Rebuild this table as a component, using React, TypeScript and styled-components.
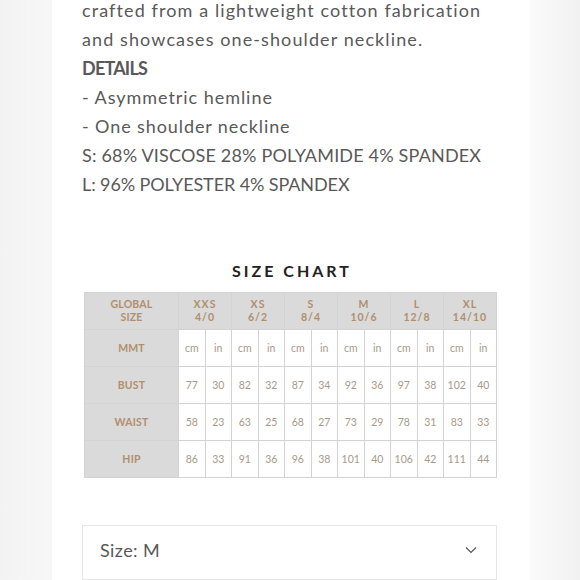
import React from 'react';
import styled, { createGlobalStyle } from 'styled-components';

const GlobalStyle = createGlobalStyle`
  html, body {
    margin: 0;
    padding: 0;
  }
  body {
    width: 580px;
    height: 580px;
    overflow: hidden;
    background: linear-gradient(90deg, #f3f3f3 0%, #f7f7f7 9%, #fbfbfb 91%, #f1f1f1 100%);
    font-family: 'Lato', 'Liberation Sans', sans-serif;
  }
`;

const Page = styled.div`
  width: 478px;
  height: 580px;
  margin-left: 52px;
  background: #ffffff;
  overflow: hidden;
`;

const Description = styled.div`
  padding: 0 30px;
  margin-top: -4px;
  color: #595959;
  font-size: 18px;
  line-height: 29px;
`;

const Line = styled.div<{ bold?: boolean; spacing?: number }>`
  font-weight: ${p => (p.bold ? 700 : 400)};
  letter-spacing: ${p => p.spacing ?? 0}px;
  white-space: nowrap;
`;

const ChartTitle = styled.h2`
  margin: 62px 0 12px;
  text-align: center;
  font-size: 16px;
  font-weight: 700;
  letter-spacing: 3px;
  color: #222;
  padding-left: 2px;
`;

const Table = styled.table`
  margin-left: 32px;
  border-collapse: collapse;
  table-layout: fixed;
  width: 413px;
  font-size: 10.5px;
`;

const Cell = styled.td<{ head?: boolean }>`
  border: 1px solid #d3d3d3;
  height: 36px;
  padding: 0;
  text-align: center;
  vertical-align: middle;
  background: ${p => (p.head ? '#dadada' : '#fff')};
  color: ${p => (p.head ? '#b08f6c' : '#a8998a')};
  font-weight: ${p => (p.head ? 700 : 400)};
  line-height: 13px;
  letter-spacing: ${p => (p.head ? '0.2px' : '0')};
`;

const SizeCell = styled(Cell)`
  letter-spacing: 1px;
`;

const Select = styled.div`
  margin: 47px 0 0 30px;
  width: 415px;
  height: 55px;
  border: 1px solid #e6e6e6;
  box-sizing: border-box;
  display: flex;
  align-items: center;
  justify-content: space-between;
  padding: 0 19px 5px 17px;
  color: #595959;
  font-size: 18px;
  letter-spacing: 0.4px;
`;

const sizes = [
  ['XXS', '4/0'],
  ['XS', '6/2'],
  ['S', '8/4'],
  ['M', '10/6'],
  ['L', '12/8'],
  ['XL', '14/10'],
];

const rows: [string, string[]][] = [
  ['MMT', Array.from({ length: 6 }).flatMap(() => ['cm', 'in'])],
  ['BUST', ['77', '30', '82', '32', '87', '34', '92', '36', '97', '38', '102', '40']],
  ['WAIST', ['58', '23', '63', '25', '68', '27', '73', '29', '78', '31', '83', '33']],
  ['HIP', ['86', '33', '91', '36', '96', '38', '101', '40', '106', '42', '111', '44']],
];

export default function App() {
  return (
    <>
      <GlobalStyle />
      <Page>
        <Description>
          <Line spacing={1.1}>crafted from a lightweight cotton fabrication</Line>
          <Line spacing={1.1}>and showcases one-shoulder neckline.</Line>
          <Line bold spacing={-0.8}>DETAILS</Line>
          <Line spacing={0.95}>- Asymmetric hemline</Line>
          <Line spacing={0.9}>- One shoulder neckline</Line>
          <Line spacing={0.18}>S: 68% VISCOSE 28% POLYAMIDE 4% SPANDEX</Line>
          <Line spacing={-0.1}>L: 96% POLYESTER 4% SPANDEX</Line>
        </Description>

        <ChartTitle>SIZE CHART</ChartTitle>

        <Table>
          <colgroup>
            <col style={{ width: 94 }} />
            {Array.from({ length: 12 }).map((_, i) => (
              <col key={i} />
            ))}
          </colgroup>
          <tbody>
            <tr>
              <Cell head>
                GLOBAL
                <br />
                SIZE
              </Cell>
              {sizes.map(([s, n]) => (
                <SizeCell head key={s} colSpan={2}>
                  {s}
                  <br />
                  {n}
                </SizeCell>
              ))}
            </tr>
            {rows.map(([label, values]) => (
              <tr key={label}>
                <Cell head>{label}</Cell>
                {values.map((v, i) => (
                  <Cell key={i}>{v}</Cell>
                ))}
              </tr>
            ))}
          </tbody>
        </Table>

        <Select>
          <span>Size: M</span>
          <svg width="12" height="8" viewBox="0 0 12 8" fill="none">
            <path d="M1 1.5 L6 6.5 L11 1.5" stroke="#555" strokeWidth="1.2" />
          </svg>
        </Select>
      </Page>
    </>
  );
}
